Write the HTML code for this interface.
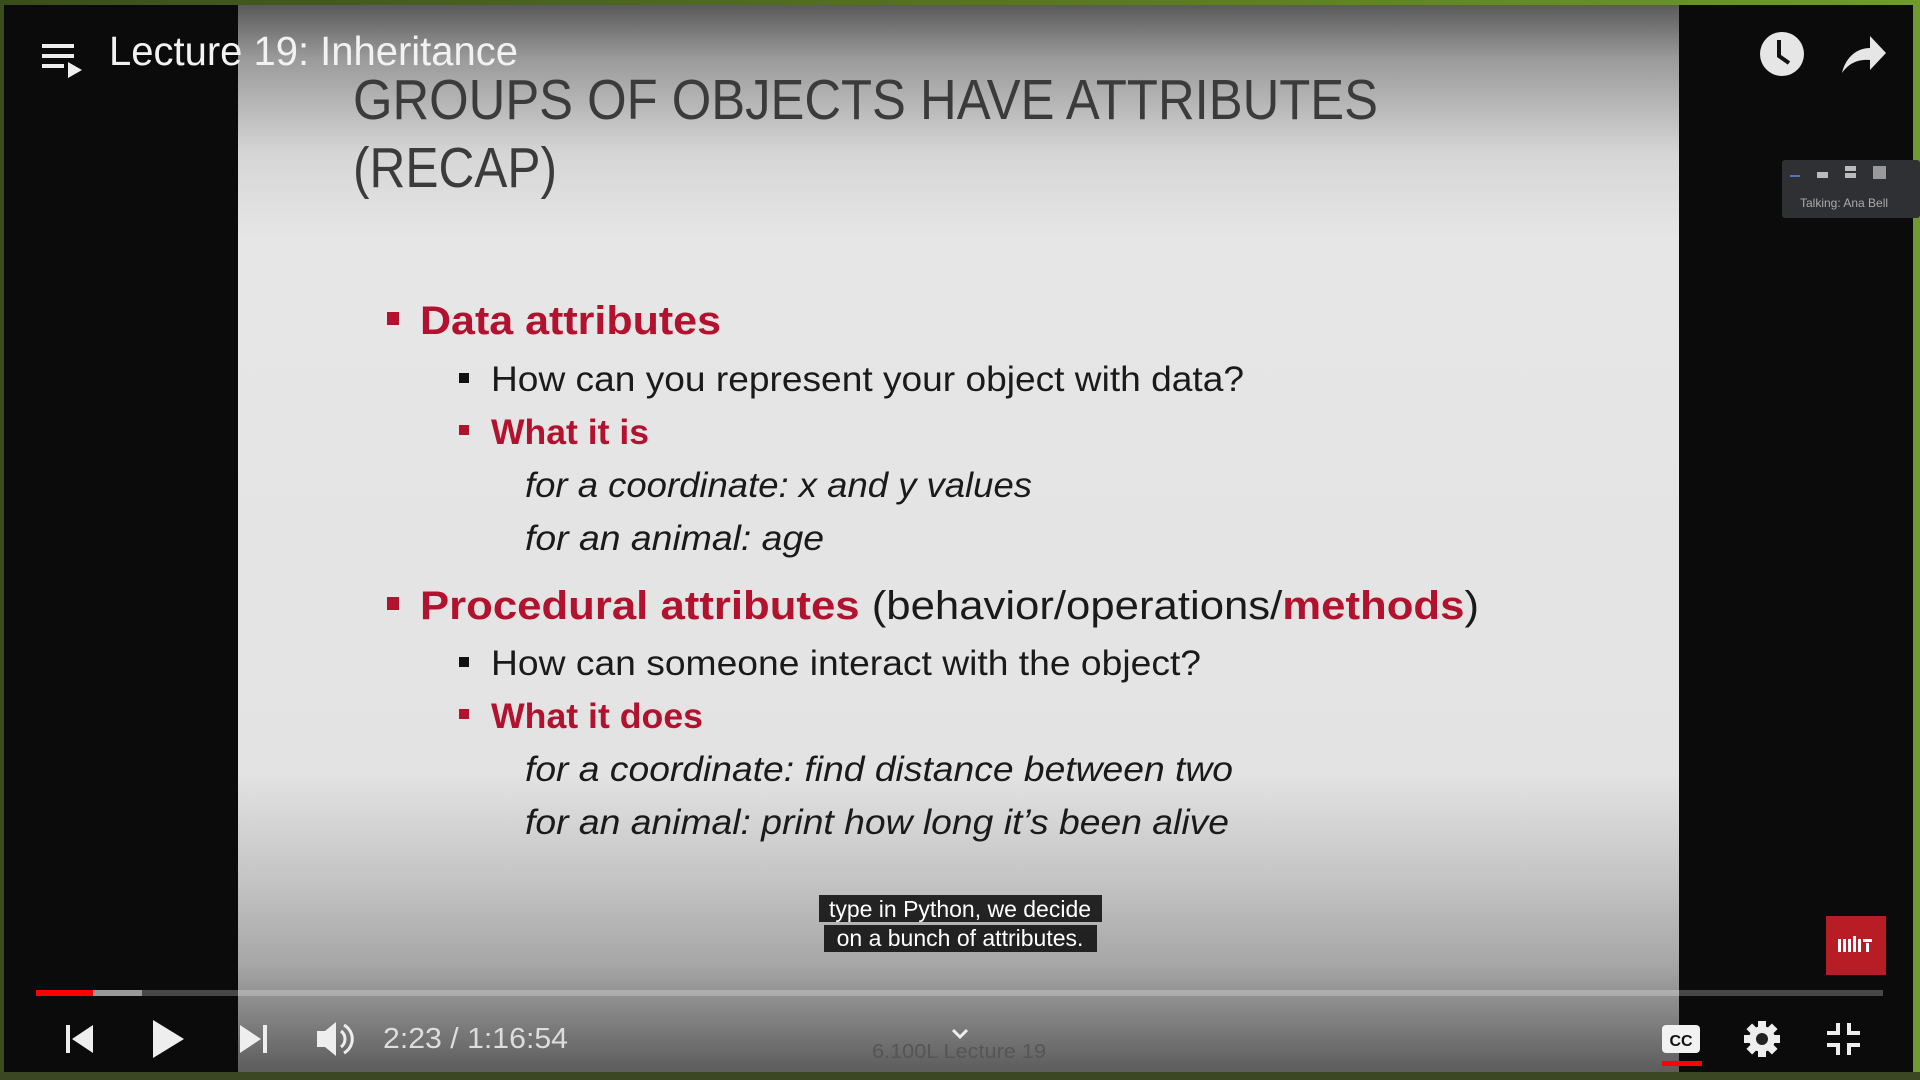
<!DOCTYPE html>
<html><head><meta charset="utf-8"><style>
html,body{margin:0;padding:0;background:#0b0b0b;overflow:hidden}
svg{display:block}
</style></head><body>
<svg width="1920" height="1080" viewBox="0 0 1920 1080" xmlns="http://www.w3.org/2000/svg">
<defs>
<linearGradient id="sl" x1="0" y1="0" x2="0" y2="1">
<stop offset="0" stop-color="#5a5a5a"/>
<stop offset="0.05" stop-color="#9a9a9a"/>
<stop offset="0.14" stop-color="#d6d6d6"/>
<stop offset="0.22" stop-color="#e6e6e6"/>
<stop offset="0.72" stop-color="#e3e3e3"/>
<stop offset="0.82" stop-color="#c4c4c4"/>
<stop offset="0.9" stop-color="#a6a6a6"/>
<stop offset="1" stop-color="#5c5c5c"/>
</linearGradient>
<linearGradient id="fr" x1="0" y1="0" x2="1" y2="0">
<stop offset="0" stop-color="#3a4d1c"/>
<stop offset="1" stop-color="#6f9a2c"/>
</linearGradient>
</defs>
<rect width="1920" height="1080" fill="url(#fr)"/>
<rect x="4" y="5" width="1909" height="1067" fill="#0b0b0b"/>
<rect x="238" y="5" width="1441" height="1067" fill="url(#sl)"/>
<rect x="0" y="1072" width="1920" height="8" fill="#3b4622"/>

<g font-family="'Liberation Sans',sans-serif">
<text x="353" y="119" font-size="57" fill="#3b3b3b" textLength="1025" lengthAdjust="spacingAndGlyphs">GROUPS OF OBJECTS HAVE ATTRIBUTES</text>
<text x="353" y="187" font-size="57" fill="#3b3b3b" textLength="204" lengthAdjust="spacingAndGlyphs">(RECAP)</text>

<rect x="387" y="312" width="12" height="13" fill="#b3122e"/>
<text x="420" y="334" font-size="40" font-weight="bold" fill="#b3122e" textLength="301" lengthAdjust="spacingAndGlyphs">Data attributes</text>
<rect x="459" y="373" width="10" height="10" fill="#111"/>
<text x="491" y="391" font-size="35" fill="#1a1a1a" textLength="753" lengthAdjust="spacingAndGlyphs">How can you represent your object with data?</text>
<rect x="459" y="425" width="10" height="10" fill="#b3122e"/>
<text x="491" y="444" font-size="35" font-weight="bold" fill="#b3122e" textLength="158" lengthAdjust="spacingAndGlyphs">What it is</text>
<text x="525" y="497" font-size="35" font-style="italic" fill="#1a1a1a" textLength="507" lengthAdjust="spacingAndGlyphs">for a coordinate: x and y values</text>
<text x="525" y="550" font-size="35" font-style="italic" fill="#1a1a1a" textLength="299" lengthAdjust="spacingAndGlyphs">for an animal: age</text>

<rect x="387" y="597" width="12" height="13" fill="#b3122e"/>
<text x="420" y="619" font-size="40" fill="#1a1a1a" textLength="1059" lengthAdjust="spacingAndGlyphs"><tspan font-weight="bold" fill="#b3122e">Procedural attributes</tspan> (behavior/operations/<tspan font-weight="bold" fill="#b3122e">methods</tspan>)</text>
<rect x="459" y="657" width="10" height="10" fill="#111"/>
<text x="491" y="675" font-size="35" fill="#1a1a1a" textLength="710" lengthAdjust="spacingAndGlyphs">How can someone interact with the object?</text>
<rect x="459" y="709" width="10" height="10" fill="#b3122e"/>
<text x="491" y="728" font-size="35" font-weight="bold" fill="#b3122e" textLength="212" lengthAdjust="spacingAndGlyphs">What it does</text>
<text x="525" y="781" font-size="35" font-style="italic" fill="#1a1a1a" textLength="708" lengthAdjust="spacingAndGlyphs">for a coordinate: find distance between two</text>
<text x="525" y="834" font-size="35" font-style="italic" fill="#1a1a1a" textLength="704" lengthAdjust="spacingAndGlyphs">for an animal: print how long it’s been alive</text>

<text x="959" y="1058" font-size="20" fill="#555" text-anchor="middle" textLength="174" lengthAdjust="spacingAndGlyphs">6.100L Lecture 19</text>

<!-- top bar -->
<g fill="#eee">
<rect x="42" y="44" width="32" height="4"/><rect x="42" y="54" width="32" height="4"/><rect x="42" y="64" width="22" height="4"/>
<path d="M68 62 L82 70 L68 78Z"/>
</g>
<text x="109" y="65" font-size="41" fill="#f2f2f2" textLength="409" lengthAdjust="spacingAndGlyphs">Lecture 19: Inheritance</text>
<circle cx="1782" cy="54" r="22" fill="#e6e6e6"/>
<path d="M1779 40 V56 L1789 63" stroke="#111" stroke-width="4" fill="none"/>
<path d="M1842 73 C1846 56 1858 48 1870 48 V36 L1886 53 L1870 70 V60 C1858 59 1849 63 1842 73Z" fill="#e6e6e6"/>

<!-- zoom panel -->
<rect x="1782" y="160" width="138" height="58" rx="3" fill="#2e3033"/>
<rect x="1790" y="175" width="10" height="2" fill="#4a78c0"/>
<rect x="1817" y="172" width="11" height="6" fill="#bbb"/>
<rect x="1845" y="166" width="11" height="5" fill="#bbb"/><rect x="1845" y="173" width="11" height="5" fill="#bbb"/>
<rect x="1873" y="166" width="13" height="13" fill="#999"/>
<text x="1800" y="207" font-size="12" fill="#aaa">Talking: Ana Bell</text>

<!-- captions -->
<rect x="819" y="895" width="283" height="27" fill="#080808" fill-opacity="0.85"/>
<rect x="824" y="925" width="273" height="27" fill="#080808" fill-opacity="0.85"/>
<text x="960" y="917" font-size="23" fill="#fff" text-anchor="middle">type in Python, we decide</text>
<text x="960" y="946" font-size="23" fill="#fff" text-anchor="middle">on a bunch of attributes.</text>

<!-- MIT logo -->
<rect x="1826" y="916" width="60" height="59" fill="#b81c24"/>
<g fill="#fff"><rect x="1838" y="939" width="3" height="13"/><rect x="1843" y="939" width="3" height="13"/><rect x="1848" y="939" width="3" height="13"/><rect x="1853" y="936" width="3" height="16"/><rect x="1858" y="939" width="3" height="13"/><rect x="1863" y="939" width="9" height="3"/><rect x="1866" y="943" width="3" height="9"/></g>

<!-- progress -->
<rect x="36" y="990" width="1847" height="6" fill="#ffffff" fill-opacity="0.25"/>
<rect x="36" y="990" width="106" height="6" fill="#999"/>
<rect x="36" y="990" width="57" height="6" fill="#f00"/>

<!-- controls -->
<g fill="#eee">
<rect x="66" y="1025" width="4" height="28"/><path d="M93 1025 V1053 L72 1039Z"/>
<path d="M153 1020 V1058 L184 1039Z"/>
<path d="M240 1025 V1053 L261 1039Z"/><rect x="263" y="1025" width="4" height="28"/>
<path d="M317 1031 H325 L336 1022 V1056 L325 1047 H317Z"/>
</g>
<path d="M341 1031 A10 10 0 0 1 341 1047" stroke="#eee" stroke-width="3" fill="none"/>
<path d="M344 1025 A16 16 0 0 1 344 1053" stroke="#eee" stroke-width="3" fill="none"/>
<text x="383" y="1048" font-size="29" fill="#ddd" textLength="185" lengthAdjust="spacingAndGlyphs">2:23 / 1:16:54</text>
<path d="M953 1030 L960 1037 L967 1030" stroke="#eee" stroke-width="3" fill="none"/>

<rect x="1662" y="1025" width="38" height="28" rx="4" fill="#f2f2f2"/>
<text x="1681" y="1046" font-size="16" font-weight="bold" fill="#111" text-anchor="middle">CC</text>
<rect x="1662" y="1061" width="40" height="5" fill="#f00"/>
<g transform="translate(1762,1039)">
<circle r="13" fill="#eee"/>
<g fill="#eee"><rect x="-4" y="-18" width="8" height="36"/><rect x="-18" y="-4" width="36" height="8"/>
<rect x="-4" y="-18" width="8" height="36" transform="rotate(45)"/><rect x="-4" y="-18" width="8" height="36" transform="rotate(-45)"/></g>
<circle r="6" fill="#222"/>
</g>
<g fill="#eee">
<rect x="1836" y="1023" width="4" height="12"/><rect x="1827" y="1031" width="13" height="4"/>
<rect x="1847" y="1023" width="4" height="12"/><rect x="1847" y="1031" width="13" height="4"/>
<rect x="1836" y="1043" width="4" height="12"/><rect x="1827" y="1043" width="13" height="4"/>
<rect x="1847" y="1043" width="4" height="12"/><rect x="1847" y="1043" width="13" height="4"/>
</g>
</g>
</svg>
</body></html>
